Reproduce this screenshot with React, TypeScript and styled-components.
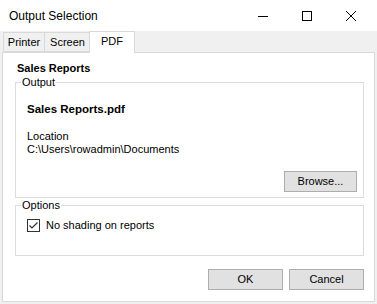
import React from "react";
import styled, { createGlobalStyle } from "styled-components";

const Global = createGlobalStyle`
  html, body { margin: 0; padding: 0; }
  body {
    background: #f0f0f0;
    font-family: "Liberation Sans", Arial, sans-serif;
    font-size: 11px;
    color: #000;
    width: 377px;
    height: 304px;
    overflow: hidden;
  }
`;

const Window = styled.div`
  width: 377px;
  height: 304px;
  display: flex;
  flex-direction: column;
  background: #f0f0f0;
`;

const TitleBar = styled.div`
  height: 31px;
  background: #fff;
  display: flex;
  align-items: center;
  padding-left: 9px;
  padding-right: 4px;
  box-sizing: border-box;
`;

const Title = styled.div`
  flex: 1;
  font-size: 12px;
  line-height: 16px;
  color: #000;
`;

const CaptionButton = styled.div`
  width: 44px;
  height: 31px;
  display: flex;
  align-items: center;
  justify-content: center;
`;

const TabStrip = styled.div`
  height: 21px;
  display: flex;
  align-items: flex-end;
  padding-left: 3px;
  position: relative;
  z-index: 1;
`;

const Tab = styled.div<{ $active?: boolean; $w: number }>`
  box-sizing: border-box;
  width: ${(p) => p.$w}px;
  height: ${(p) => (p.$active ? 22 : 20)}px;
  margin-left: ${(p) => (p.$active ? -2 : -1)}px;
  margin-bottom: ${(p) => (p.$active ? -1 : 0)}px;
  border: 1px solid #d9d9d9;
  border-bottom: ${(p) => (p.$active ? "none" : "1px solid #d9d9d9")};
  background: ${(p) => (p.$active ? "#fff" : "#f0f0f0")};
  display: flex;
  align-items: ${(p) => (p.$active ? "flex-start" : "center")};
  justify-content: center;
  padding-top: ${(p) => (p.$active ? 3 : 0)}px;
  line-height: 13px;
  position: relative;
  z-index: ${(p) => (p.$active ? 2 : 1)};
  &:first-child { margin-left: 0; }
`;

const Panel = styled.div`
  margin: 0 2px;
  flex: 1;
  margin-bottom: 2px;
  background: #fff;
  border: 1px solid #d9d9d9;
  box-sizing: border-box;
  padding: 9px 10px 11px 12px;
  display: flex;
  flex-direction: column;
`;

const Heading = styled.div`
  font-weight: bold;
  font-size: 11px;
  line-height: 13px;
  padding-left: 2px;
`;

const Group = styled.fieldset<{ $gap: number }>`
  margin: ${(p) => p.$gap}px 0 0 0;
  padding: 0;
  border: 1px solid #dcdcdc;
  min-width: 0;
`;

const Legend = styled.legend`
  margin-left: 5px;
  padding: 0 1px;
  line-height: 13px;
  font-size: 11px;
`;

const GroupBody = styled.div<{ $pt: number; $pb: number }>`
  padding: ${(p) => p.$pt}px 6px ${(p) => p.$pb}px 11px;
  display: flex;
  flex-direction: column;
`;

const FileName = styled.div`
  font-weight: bold;
  font-size: 11.5px;
  line-height: 14px;
`;

const Label = styled.div<{ $mt?: number }>`
  line-height: 13px;
  margin-top: ${(p) => p.$mt || 0}px;
`;

const ButtonRow = styled.div<{ $mt: number }>`
  display: flex;
  justify-content: flex-end;
  gap: 6px;
  margin-top: ${(p) => p.$mt}px;
`;

const Button = styled.button<{ $w: number }>`
  width: ${(p) => p.$w}px;
  height: 21px;
  box-sizing: border-box;
  background: #e1e1e1;
  border: 1px solid #adadad;
  font-family: "Liberation Sans", Arial, sans-serif;
  font-size: 11px;
  color: #000;
  padding: 0;
  margin: 0;
  line-height: 13px;
`;

const CheckRow = styled.label`
  display: flex;
  align-items: center;
  height: 13px;
  gap: 6px;
  line-height: 13px;
`;

const Box = styled.span`
  width: 13px;
  height: 13px;
  box-sizing: border-box;
  border: 1px solid #333;
  background: #fff;
  display: flex;
  align-items: center;
  justify-content: center;
`;

export default function App() {
  return (
    <Window>
      <Global />
      <TitleBar>
        <Title>Output Selection</Title>
        <CaptionButton>
          <svg width="12" height="12" viewBox="0 0 12 12">
            <path d="M1 6.5h10" stroke="#000" strokeWidth="1" />
          </svg>
        </CaptionButton>
        <CaptionButton>
          <svg width="12" height="12" viewBox="0 0 12 12">
            <rect x="1.5" y="1.5" width="9" height="9" fill="none" stroke="#000" strokeWidth="1" />
          </svg>
        </CaptionButton>
        <CaptionButton>
          <svg width="12" height="12" viewBox="0 0 12 12">
            <path d="M1 1L11 11M11 1L1 11" stroke="#000" strokeWidth="1" />
          </svg>
        </CaptionButton>
      </TitleBar>
      <TabStrip>
        <Tab $w={42}>Printer</Tab>
        <Tab $w={47}>Screen</Tab>
        <Tab $w={46} $active>PDF</Tab>
      </TabStrip>
      <Panel>
        <Heading>Sales Reports</Heading>
        <Group $gap={1}>
          <Legend>Output</Legend>
          <GroupBody $pt={13} $pb={5}>
            <FileName>Sales Reports.pdf</FileName>
            <Label $mt={14}>Location</Label>
            <Label>C:\Users\rowadmin\Documents</Label>
            <ButtonRow $mt={15}>
              <Button $w={73}>Browse...</Button>
            </ButtonRow>
          </GroupBody>
        </Group>
        <Group $gap={1}>
          <Legend>Options</Legend>
          <GroupBody $pt={7} $pb={23}>
            <CheckRow>
              <Box>
                <svg width="11" height="11" viewBox="0 0 11 11">
                  <path d="M1.5 5.5L4 8L9.5 2.5" fill="none" stroke="#333" strokeWidth="1.2" />
                </svg>
              </Box>
              No shading on reports
            </CheckRow>
          </GroupBody>
        </Group>
        <ButtonRow $mt={13}>
          <Button $w={75}>OK</Button>
          <Button $w={75}>Cancel</Button>
        </ButtonRow>
      </Panel>
    </Window>
  );
}
